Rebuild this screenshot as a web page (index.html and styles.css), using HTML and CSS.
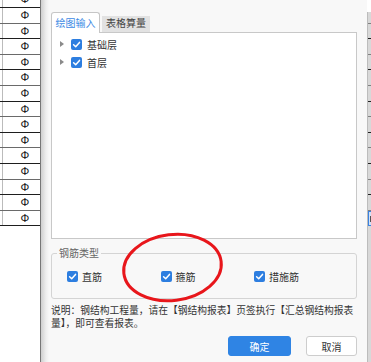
FILE: index.html
```html
<!DOCTYPE html>
<html lang="zh">
<head>
    <meta charset="UTF-8">
    <title>钢筋类型</title>
    <link rel="stylesheet" href="styles.css">
</head>
<body>
    <div class="screen">
        <!-- 左侧表格 -->
        <div class="sheet">
            <div class="sheet-rows">
                <div class="row"><span class="edge"></span><span class="sym">Φ</span></div>
                <div class="row"><span class="edge"></span><span class="sym">Φ</span></div>
                <div class="row"><span class="edge"></span><span class="sym">Φ</span></div>
                <div class="row"><span class="edge"></span><span class="sym">Φ</span></div>
                <div class="row"><span class="edge"></span><span class="sym">Φ</span></div>
                <div class="row"><span class="edge"></span><span class="sym">Φ</span></div>
                <div class="row"><span class="edge"></span><span class="sym">Φ</span></div>
                <div class="row"><span class="edge"></span><span class="sym">Φ</span></div>
                <div class="row"><span class="edge"></span><span class="sym">Φ</span></div>
                <div class="row"><span class="edge"></span><span class="sym">Φ</span></div>
                <div class="row"><span class="edge"></span><span class="sym">Φ</span></div>
                <div class="row"><span class="edge"></span><span class="sym">Φ</span></div>
                <div class="row"><span class="edge"></span><span class="sym">Φ</span></div>
                <div class="row"><span class="edge"></span><span class="sym">Φ</span></div>
                <div class="row"><span class="edge"></span><span class="sym">Φ</span></div>
            </div>
        </div>

        <!-- 对话框 -->
        <div class="dialog">
            <div class="tabs">
                <div class="tab active">绘图输入</div>
                <div class="tab">表格算量</div>
            </div>

            <div class="tree">
                <div class="tree-row">
                    <span class="arrow"></span>
                    <span class="check"><svg viewBox="0 0 11 11"><path d="M2.6 5.7 L4.7 7.7 L8.5 3.4"/></svg></span>
                    <span>基础层</span>
                </div>
                <div class="tree-row">
                    <span class="arrow"></span>
                    <span class="check"><svg viewBox="0 0 11 11"><path d="M2.6 5.7 L4.7 7.7 L8.5 3.4"/></svg></span>
                    <span>首层</span>
                </div>
            </div>

            <fieldset class="types">
                <legend>钢筋类型</legend>
                <div class="opts">
                    <label class="opt"><span class="check"><svg viewBox="0 0 11 11"><path d="M2.6 5.7 L4.7 7.7 L8.5 3.4"/></svg></span>直筋</label>
                    <label class="opt"><span class="check"><svg viewBox="0 0 11 11"><path d="M2.6 5.7 L4.7 7.7 L8.5 3.4"/></svg></span>箍筋</label>
                    <label class="opt"><span class="check"><svg viewBox="0 0 11 11"><path d="M2.6 5.7 L4.7 7.7 L8.5 3.4"/></svg></span>措施筋</label>
                </div>
            </fieldset>

            <p class="note">说明：钢结构工程量，请在【钢结构报表】页签执行【汇总钢结构报表量】，即可查看报表。</p>

            <div class="actions">
                <button class="btn primary">确定</button>
                <button class="btn">取消</button>
            </div>
        </div>

        <!-- 右侧表格边缘 -->
        <div class="strip">
            <div class="strip-body">
                <div class="strip-row first"></div>
                <div class="strip-row"></div>
                <div class="strip-row"></div>
                <div class="strip-row"></div>
                <div class="strip-row"></div>
                <div class="strip-row"></div>
                <div class="strip-row"></div>
                <div class="strip-row"></div>
                <div class="strip-row"></div>
                <div class="strip-row"></div>
                <div class="strip-row"></div>
                <div class="strip-row"></div>
                <div class="strip-row"></div>
                <div class="strip-row sel"></div>
            </div>
        </div>
    </div>

    <!-- 红圈标注 -->
    <svg class="mark" width="371" height="362" viewBox="0 0 371 362">
        <ellipse cx="172.5" cy="267.5" rx="49" ry="33" transform="rotate(-7 172.5 267.5)" fill="none" stroke="#e8161b" stroke-width="3"/>
    </svg>
</body>
</html>
```

FILE: styles.css
```css
body {
    margin: 0;
    width: 371px;
    height: 362px;
    overflow: hidden;
    position: relative;
    background: #fff;
    font-family: "Noto Sans CJK SC", sans-serif;
    color: #333;
}

.screen {
    display: flex;
    height: 362px;
}

/* 左侧表格 */
.sheet {
    width: 41px;
    flex: none;
    box-sizing: border-box;
    border-right: 1px solid #777;
    background: #fff;
}
.sheet-rows {
    margin-top: -7.6px;
}
.row {
    display: flex;
    height: 15.6px;
    box-sizing: border-box;
    border-bottom: 1px solid #1e1e1e;
}
.row:nth-child(even) {
    border-bottom-color: #6a6a6a;
}
.row .edge {
    width: 2px;
    border-right: 1px solid #bbb;
}
.row .sym {
    flex: 1;
    padding-left: 7px;
    text-align: center;
    font: 11px/14.6px "Liberation Sans", sans-serif;
    color: #111;
}

/* 对话框 */
.dialog {
    flex: 1;
    padding: 12px 10px 0 10px;
    background: linear-gradient(to right, #cfcfcf 0, #eeeeee 5px, #f8f8f8 8px);
}

.tabs {
    display: flex;
    align-items: flex-end;
    height: 20px;
    gap: 2px;
}
.tab {
    font-size: 10px;
    line-height: 14px;
    height: 16px;
    box-sizing: border-box;
    padding: 0 4px;
    background: #e2e2e2;
    color: #444;
}
.tab.active {
    height: 21px;
    margin-bottom: -1px;
    line-height: 19px;
    padding: 0 3.5px;
    background: #fff;
    color: #3d8ae4;
    border: 1px solid #c6c6c6;
    border-bottom: none;
    border-radius: 3px 3px 0 0;
    position: relative;
    z-index: 1;
}

.tree {
    height: 207px;
    box-sizing: border-box;
    border: 1px solid #c8c8c8;
    background: #fff;
    padding: 2px 0 0 8px;
}
.tree-row {
    height: 18px;
    display: flex;
    align-items: center;
    font-size: 10px;
}
.arrow {
    width: 0;
    height: 0;
    border-left: 4px solid #8a8a8a;
    border-top: 3px solid transparent;
    border-bottom: 3px solid transparent;
    margin-right: 7px;
}
.check {
    width: 11px;
    height: 11px;
    flex: none;
    border-radius: 2px;
    background: #2d7ee0;
    display: inline-flex;
    margin-right: 5px;
}
.check svg {
    width: 11px;
    height: 11px;
}
.check path {
    fill: none;
    stroke: #fff;
    stroke-width: 1.5;
    stroke-linecap: round;
    stroke-linejoin: round;
}

/* 钢筋类型 */
.types {
    margin: 8px 0 0 0;
    padding: 9px 0 14px 0;
    border: 1px solid #d4d4d4;
    border-radius: 3px;
}
.types legend {
    margin-left: 5px;
    padding: 0 2px;
    font-size: 10px;
    line-height: 12px;
    color: #666;
}
.opts {
    display: flex;
    padding-left: 15px;
}
.opt {
    width: 93.5px;
    height: 16px;
    display: flex;
    align-items: center;
    font-size: 10px;
}
.opt .check {
    margin-right: 4px;
}

/* 说明 */
.note {
    margin: 4.5px 0 0 0;
    font-size: 9.75px;
    line-height: 13px;
    color: #333;
}

.actions {
    display: flex;
    justify-content: flex-end;
    gap: 15px;
    margin-top: 6.5px;
}
.btn {
    height: 20px;
    width: 51px;
    padding: 0;
    border: 1px solid #cdcdcd;
    border-radius: 3px;
    background: #fff;
    font-family: "Noto Sans CJK SC", sans-serif;
    font-size: 10px;
    color: #333;
}
.btn.primary {
    width: 63px;
    border-color: #2f84e4;
    background: #2f84e4;
    color: #fff;
}

/* 右侧表格边缘 */
.strip {
    width: 4px;
    flex: none;
    padding-top: 12px;
    display: flex;
    flex-direction: column;
}
.strip-body {
    flex: 1;
    background: #d8d8d8;
    border-left: 1px solid #bcbcbc;
}
.strip-row {
    height: 15.6px;
    box-sizing: border-box;
    border-bottom: 1px solid #222;
}
.strip-row:nth-child(odd) {
    border-bottom-color: #808080;
}
.strip-row.first {
    height: 11.6px;
}
.strip-row.sel {
    position: relative;
    background: #cfe1f7;
    border: 1px solid #3b82e0;
    border-right: none;
}
.strip-row.sel::before {
    content: "";
    position: absolute;
    left: 1px;
    top: 4px;
    width: 1px;
    height: 6px;
    background: #555;
}

/* 红圈 */
.mark {
    position: absolute;
    left: 0;
    top: 0;
    pointer-events: none;
}
```
